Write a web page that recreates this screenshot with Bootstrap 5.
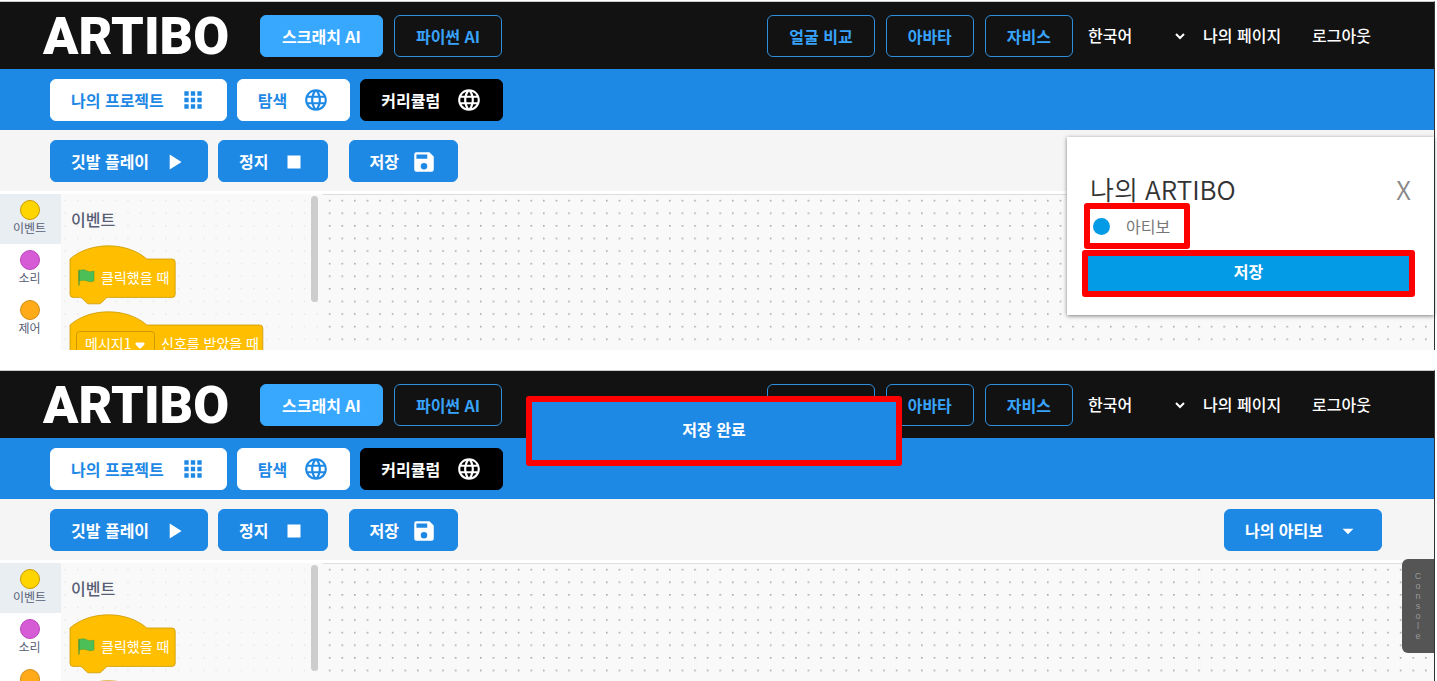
<!DOCTYPE html>
<html lang="ko">
<head>
<meta charset="utf-8">
<meta name="viewport" content="width=device-width, initial-scale=1">
<title>ARTIBO</title>
<link href="https://cdn.jsdelivr.net/npm/bootstrap@5.3.0/dist/css/bootstrap.min.css" rel="stylesheet">
<style>
body{font-family:"Noto Sans CJK KR","Noto Sans",sans-serif;font-size:16px;line-height:24px;background:#fff;color:#333;padding:1px 2px 0 0;overflow-x:hidden}
.screen{border-top:1px solid #c9cccc;border-right:1px solid #333}
.second{margin-top:20px}
.topbar{background:#121212;height:67px;padding:0 63px 0 43px}
.topbar .btn{padding:0 21px}
.brand-word{font-family:Roboto,"Liberation Sans",sans-serif;font-weight:900;font-size:52px;line-height:52px;color:#fff;width:217px;padding-top:3px}
.rowgap{gap:11px}
.bluebar{background:#1e88e5;height:61px;padding:0 52px 0 50px;gap:10px}
.toolbar{background:#f5f5f5;height:61px;padding:0 52px 0 50px;gap:10px}
.btn{height:42px;padding:0 20px;border-radius:6px;font-size:16px;line-height:24px;font-weight:700;display:inline-flex;align-items:center;white-space:nowrap}
.btn svg{width:26px;height:26px;margin-left:16px;fill:currentColor;flex:none}
.toolbar .btn svg{margin-top:3px;margin-left:12px}
.toolbar .apart{margin-left:11px}
.btn-sky{--bs-btn-color:#fff;--bs-btn-bg:#38a8ff;--bs-btn-border-color:#38a8ff}
.btn-line{--bs-btn-color:#38a3fa;--bs-btn-border-color:#2f8fdd}
.btn-paper{--bs-btn-color:#1e88e5;--bs-btn-bg:#fff;--bs-btn-border-color:#fff}
.btn-ink{--bs-btn-color:#fff;--bs-btn-bg:#000;--bs-btn-border-color:#000}
.btn-fill{--bs-btn-color:#fff;--bs-btn-bg:#1e88e5;--bs-btn-border-color:#1e88e5}
.toplink{color:#fff;text-decoration:none;white-space:nowrap;font-weight:500;padding-bottom:2px}
.lang{width:104px;height:38px;border:0;padding:0 0 2px 4px;background-color:transparent;color:#fff;font-size:16px;font-weight:500;background-size:12px 12px;background-position:right 2px center;background-image:url("data:image/svg+xml,%3Csvg xmlns='http://www.w3.org/2000/svg' viewBox='0 0 12 12'%3E%3Cpath d='M2 4l4 4 4-4' fill='none' stroke='white' stroke-width='2'/%3E%3C/svg%3E")}
.workspace{margin-top:3px;overflow:hidden;background:#f9f9f9}
.ws-tall{height:156px}
.ws-short{height:119px}
.cats{width:61px;background:#fff;flex:none}
.cat{height:50px;border:0;background:none;width:100%;padding:6px 2px 0 0;font-size:12px;line-height:16px;color:#575e75;display:flex;flex-direction:column;align-items:center;gap:0}
.cat.on{background:#e9eef2}
.dot-mark{width:20px;height:20px;border-radius:50%;border:1px solid;flex:none}
.flyout{width:262px;flex:none}
.flyout h2{font-size:16px;line-height:24px;font-weight:500;color:#575e75;margin:13px 0 0 10px}
.flyout svg.blocks{display:block;width:250px;height:130px;margin-top:14px;overflow:visible}
#stack text{font-size:14px;font-weight:400;fill:#fff}
.thumb{top:2px;right:5px;width:7px;height:106px;border-radius:4px;background:#cdcdcd}
.canvas{border-top:1px solid #ddd}
.dots{position:absolute;inset:0;width:100%;height:100%}
.pop{top:135px;right:0;width:367px;height:178px;background:#fff;box-shadow:0 1px 4px rgba(0,0,0,.5);padding:37px 19px 0 15px;z-index:3}
.pop h1{font-size:26px;line-height:30px;font-weight:350;color:#333;margin:0}
.pop .shut{border:0;background:none;padding:0;font-size:26px;line-height:30px;font-weight:350;color:#888}
.ring{border:6px solid #f00;border-radius:3px}
.pick{width:106px;height:46px;color:#777;margin:-1px 0 0 2px;padding-left:3px;font-size:16px}
.pick input{appearance:none;width:17px;height:17px;border-radius:50%;background:#039be5;margin:0 16px 0 0;flex:none}
.save{height:47px;background:#039be5;color:#fff;font-weight:700;line-height:24px;padding:0 0 6px;margin-top:1px}
.saved{top:25px;left:0;right:6px;width:376px;height:70px;margin:auto;background:#1e88e5;color:#fff;font-weight:700;z-index:3}
.console{right:0;top:188px;width:32px;height:94px;background:#555;color:#999;border:0;border-radius:6px 0 0 6px;padding:0;z-index:2;display:flex;align-items:center;justify-content:center}
.console span{font-family:"Liberation Sans",sans-serif;font-size:9px;line-height:12px;writing-mode:vertical-rl;text-orientation:upright}
</style>
</head>
<body>
<svg width="0" height="0" class="position-absolute" aria-hidden="true">
<defs>
<pattern id="grid" width="12.6" height="12.6" patternUnits="userSpaceOnUse" x="0" y="-1"><rect x="6" y="6" width="1.3" height="1.3" fill="#808080"/></pattern>
<pattern id="gridlight" width="12.6" height="12.6" patternUnits="userSpaceOnUse" x="-2.5"><rect x="6" y="6" width="1.2" height="1.2" fill="#dcdcdc"/></pattern>
<symbol id="apps" viewBox="0 0 24 24"><path d="M4 8h4V4H4zm6 12h4v-4h-4zm-6 0h4v-4H4zm0-6h4v-4H4zm6 0h4v-4h-4zm6-10v4h4V4zm-6 4h4V4h-4zm6 6h4v-4h-4zm0 6h4v-4h-4z"/></symbol>
<symbol id="globe" viewBox="0 0 24 24"><path d="M11.99 2C6.47 2 2 6.48 2 12s4.47 10 9.99 10C17.52 22 22 17.52 22 12S17.52 2 11.99 2zm6.93 6h-2.95c-.32-1.25-.78-2.45-1.38-3.56 1.84.63 3.37 1.91 4.33 3.56zM12 4.04c.83 1.2 1.48 2.53 1.91 3.96h-3.82c.43-1.43 1.08-2.76 1.91-3.96zM4.26 14C4.1 13.36 4 12.69 4 12s.1-1.36.26-2h3.38c-.08.66-.14 1.32-.14 2s.06 1.34.14 2H4.26zm.82 2h2.95c.32 1.25.78 2.45 1.38 3.56-1.84-.63-3.37-1.9-4.33-3.56zm2.95-8H5.08c.96-1.66 2.49-2.93 4.33-3.56C8.81 5.55 8.35 6.75 8.03 8zM12 19.96c-.83-1.2-1.48-2.53-1.91-3.96h3.82c-.43 1.43-1.08 2.76-1.91 3.96zM14.34 14H9.66c-.09-.66-.16-1.32-.16-2s.07-1.35.16-2h4.68c.09.65.16 1.32.16 2s-.07 1.34-.16 2zm.25 5.56c.6-1.11 1.06-2.31 1.38-3.56h2.95c-.96 1.65-2.49 2.93-4.33 3.56zM16.36 14c.08-.66.14-1.32.14-2s-.06-1.34-.14-2h3.38c.16.64.26 1.31.26 2s-.1 1.36-.26 2h-3.38z"/></symbol>
<symbol id="play" viewBox="0 0 24 24"><path d="M8 5v14l11-7z"/></symbol>
<symbol id="halt" viewBox="0 0 24 24"><path d="M6 6h12v12H6z"/></symbol>
<symbol id="disk" viewBox="0 0 24 24"><path d="M17 3H5a2 2 0 0 0-2 2v14a2 2 0 0 0 2 2h14a2 2 0 0 0 2-2V7zm-5 16a3 3 0 1 1 0-6 3 3 0 0 1 0 6zm3-10H5V5h10z"/></symbol>
<symbol id="caret" viewBox="0 0 24 24"><path d="M7 10l5 5 5-5z"/></symbol>
<g id="stack">
<path transform="translate(9 14) scale(.8)" fill="#ffbf00" stroke="#cc9900" d="M0 0c25-22 71-22 96 0h31.500a4 4 0 0 1 4 4v40a4 4 0 0 1-4 4H48c-2 0-3 1-4 2l-4 4c-1 1-2 2-4 2H24c-2 0-3-1-4-2l-4-4c-1-1-2-2-4-2H4a4 4 0 0 1-4-4z"/>
<path fill="#4cbf56" stroke="#45993d" stroke-width=".5" d="M18 26c4-2 6-1 8 0s4 1 7 0v10c-3 1-5 1-7 0s-5-1-8 0z"/><path stroke="#45993d" stroke-width="1.2" stroke-linecap="round" d="M18 25v15"/>
<text x="40" y="38">클릭했을 때</text>
<path transform="translate(9 80) scale(.8)" fill="#ffbf00" stroke="#cc9900" d="M0 0c25-22 71-22 96 0h141a4 4 0 0 1 4 4v40a4 4 0 0 1-4 4H48c-2 0-3 1-4 2l-4 4c-1 1-2 2-4 2H24c-2 0-3-1-4-2l-4-4c-1-1-2-2-4-2H4a4 4 0 0 1-4-4z"/>
<rect x="15.500" y="86.500" width="78" height="26" rx="3" fill="#ffbf00" stroke="#cc9900"/>
<text x="24" y="104">메시지1</text>
<path fill="#fff" d="M75.500 97.500h7q2 1 .5 2.500l-3 3q-1 1-2 0l-3-3q-1.500-1.500.5-2.500z"/>
<text x="100" y="104">신호를 받았을 때</text>
</g>
</defs></svg>

<section class="screen position-relative">
  <nav class="topbar d-flex align-items-center">
    <a class="brand-word text-decoration-none" href="#">ARTIBO</a>
    <div class="d-flex rowgap flex-grow-1">
      <button class="btn btn-sky">스크래치 AI</button>
      <button class="btn btn-line">파이썬 AI</button>
    </div>
    <div class="d-flex align-items-center rowgap">
      <button class="btn btn-line">얼굴 비교</button><button class="btn btn-line">아바타</button><button class="btn btn-line">자비스</button>
      <select class="form-select lang me-1" aria-label="언어"><option>한국어</option></select>
      <a class="toplink" href="#">나의 페이지</a><a class="toplink ms-3 ps-1" href="#">로그아웃</a>
    </div>
  </nav>
  <div class="bluebar d-flex align-items-center">
    <button class="btn btn-paper">나의 프로젝트<svg><use href="#apps"/></svg></button>
    <button class="btn btn-paper">탐색<svg><use href="#globe"/></svg></button>
    <button class="btn btn-ink">커리큘럼<svg><use href="#globe"/></svg></button>
  </div>
  <div class="toolbar d-flex align-items-center">
    <button class="btn btn-fill">깃발 플레이<svg><use href="#play"/></svg></button>
    <button class="btn btn-fill">정지<svg><use href="#halt"/></svg></button>
    <button class="btn btn-fill apart">저장<svg><use href="#disk"/></svg></button>
  </div>
  <div class="workspace ws-tall d-flex">
    <div class="cats">
      <button class="cat on"><span class="dot-mark" style="background:#ffd500;border-color:#cc9900"></span>이벤트</button>
      <button class="cat"><span class="dot-mark" style="background:#d65cd6;border-color:#bd42bd"></span>소리</button>
      <button class="cat"><span class="dot-mark" style="background:#ffab19;border-color:#cf8b17"></span>제어</button>
    </div>
    <div class="flyout position-relative">
      <svg class="dots"><rect width="100%" height="100%" fill="url(#gridlight)"/></svg>
      <div class="position-relative"><h2>이벤트</h2><svg class="blocks"><use href="#stack"/></svg></div>
      <div class="thumb position-absolute"></div>
    </div>
    <div class="canvas position-relative flex-grow-1"><svg class="dots"><rect width="100%" height="100%" fill="url(#grid)"/></svg></div>
  </div>
  <aside class="pop position-absolute">
    <div class="d-flex justify-content-between ps-2"><h1>나의 ARTIBO</h1><button class="shut me-1" aria-label="닫기">X</button></div>
    <label class="pick ring d-flex align-items-center"><input type="radio" name="robot" checked>아티보</label>
    <button class="save ring w-100 d-block">저장</button>
  </aside>
</section>

<section class="screen position-relative second">
  <nav class="topbar d-flex align-items-center">
    <a class="brand-word text-decoration-none" href="#">ARTIBO</a>
    <div class="d-flex rowgap flex-grow-1">
      <button class="btn btn-sky">스크래치 AI</button>
      <button class="btn btn-line">파이썬 AI</button>
    </div>
    <div class="d-flex align-items-center rowgap">
      <button class="btn btn-line">얼굴 비교</button><button class="btn btn-line">아바타</button><button class="btn btn-line">자비스</button>
      <select class="form-select lang me-1" aria-label="언어"><option>한국어</option></select>
      <a class="toplink" href="#">나의 페이지</a><a class="toplink ms-3 ps-1" href="#">로그아웃</a>
    </div>
  </nav>
  <div class="bluebar d-flex align-items-center">
    <button class="btn btn-paper">나의 프로젝트<svg><use href="#apps"/></svg></button>
    <button class="btn btn-paper">탐색<svg><use href="#globe"/></svg></button>
    <button class="btn btn-ink">커리큘럼<svg><use href="#globe"/></svg></button>
  </div>
  <div class="toolbar d-flex align-items-center">
    <button class="btn btn-fill">깃발 플레이<svg><use href="#play"/></svg></button>
    <button class="btn btn-fill">정지<svg><use href="#halt"/></svg></button>
    <button class="btn btn-fill apart">저장<svg><use href="#disk"/></svg></button>
    <button class="btn btn-fill ms-auto">나의 아티보<svg><use href="#caret"/></svg></button>
  </div>
  <div class="workspace ws-short d-flex">
    <div class="cats">
      <button class="cat on"><span class="dot-mark" style="background:#ffd500;border-color:#cc9900"></span>이벤트</button>
      <button class="cat"><span class="dot-mark" style="background:#d65cd6;border-color:#bd42bd"></span>소리</button>
      <button class="cat" aria-label="제어"><span class="dot-mark" style="background:#ffab19;border-color:#cf8b17"></span></button>
    </div>
    <div class="flyout position-relative">
      <svg class="dots"><rect width="100%" height="100%" fill="url(#gridlight)"/></svg>
      <div class="position-relative"><h2>이벤트</h2><svg class="blocks"><use href="#stack"/></svg></div>
      <div class="thumb position-absolute"></div>
    </div>
    <div class="canvas position-relative flex-grow-1"><svg class="dots"><rect width="100%" height="100%" fill="url(#grid)"/></svg></div>
  </div>
  <div class="saved ring position-absolute d-flex align-items-center justify-content-center pb-1" role="status">저장 완료</div>
  <button class="console position-absolute"><span>Console</span></button>
</section>
<script src="https://cdn.jsdelivr.net/npm/bootstrap@5.3.0/dist/js/bootstrap.bundle.min.js"></script>
</body>
</html>
